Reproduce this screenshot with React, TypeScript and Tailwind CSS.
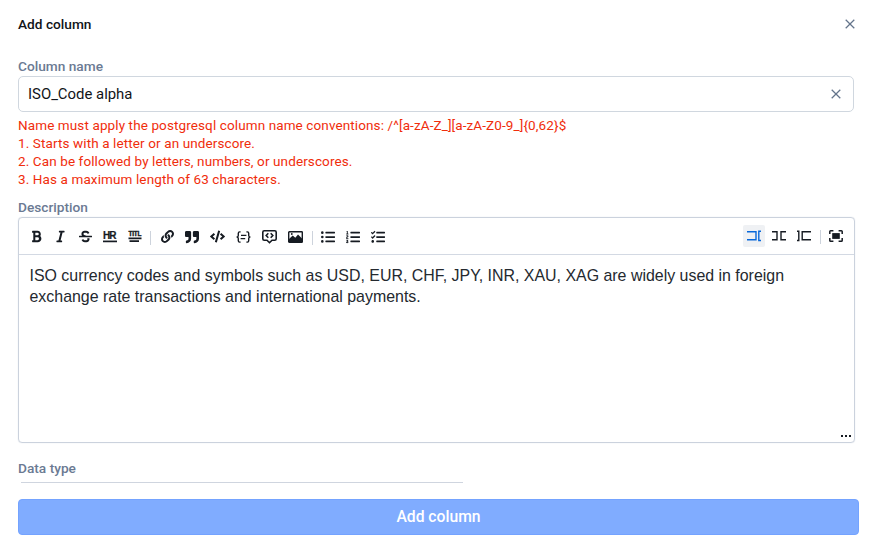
import { useState } from 'react';
import type { ReactNode } from 'react';
import { FaBold, FaItalic, FaStrikethrough, FaLink, FaQuoteRight, FaCode, FaListUl, FaListOl, FaTasks } from 'react-icons/fa';

function CloseIcon() {
  return (
    <svg className="block w-[10px] h-[10px]" viewBox="0 0 10 10" fill="none" stroke="currentColor" strokeWidth="1.25">
      <path d="M0.7 0.7l8.6 8.6M9.3 0.7L0.7 9.3" />
    </svg>
  );
}

function HrIcon() {
  return (
    <svg className="overflow-visible" width="16" height="16" viewBox="0 0 16 16" fill="currentColor" stroke="currentColor">
      <text x="1" y="9.8" textLength="13.6" fontFamily="Liberation Sans, sans-serif" fontSize="10" fontWeight="700" strokeWidth="0.2">HR</text>
      <path d="M1 12.4h14" strokeWidth="1.7" />
    </svg>
  );
}

function TitleIcon() {
  return (
    <svg className="overflow-visible" width="16" height="16" viewBox="0 0 16 16" fill="currentColor" stroke="currentColor">
      <text x="1.4" y="6.9" textLength="13" fontFamily="Liberation Sans, sans-serif" fontSize="6.4" fontWeight="700" strokeWidth="0.4">TITL</text>
      <path d="M1.5 9.3h13M2.5 12.2h9.5" strokeWidth="1.7" />
    </svg>
  );
}

function CodeBlockIcon() {
  return (
    <svg width="15" height="12" viewBox="0 0 15 12" fill="none" stroke="currentColor" strokeWidth="1.4">
      <path d="M4.6 0.9H3.6Q2.3 0.9 2.3 2.2V4.4Q2.3 6 0.6 6Q2.3 6 2.3 7.6V9.8Q2.3 11.1 3.6 11.1H4.6" />
      <path d="M10.4 0.9h1Q12.7 0.9 12.7 2.2V4.4Q12.7 6 14.4 6Q12.7 6 12.7 7.6V9.8Q12.7 11.1 11.4 11.1h-1" />
      <path d="M5 4.4h5.4M4.6 7.6h4.6" />
    </svg>
  );
}

function CommentIcon() {
  return (
    <svg width="15" height="14" viewBox="0 0 15 14" fill="none" stroke="currentColor" strokeWidth="1.6">
      <path d="M2.2 0.8h10.6q1.4 0 1.4 1.4v6.6q0 1.4-1.4 1.4H10L7.5 12.7 5 10.2H2.2Q0.8 10.2 0.8 8.8V2.2Q0.8 0.8 2.2 0.8Z" />
      <path d="M6.3 3.3L4.2 5.5l2.1 2.2M8.7 3.3l2.1 2.2-2.1 2.2" />
    </svg>
  );
}

function ImageIcon() {
  return (
    <svg width="15" height="12" viewBox="0 0 15 12">
      <rect x="0.7" y="0.7" width="13.6" height="10.6" rx="0.6" fill="none" stroke="currentColor" strokeWidth="1.4" />
      <path d="M1 11V8l3.7-3.6 2.6 2.4 2.7-3.2L14 7.6V11Z" fill="currentColor" />
      <circle cx="3.8" cy="3" r="0.9" fill="currentColor" />
    </svg>
  );
}

function EditIcon() {
  return (
    <svg width="14" height="12" viewBox="0 0 14 12" fill="none" stroke="currentColor" strokeWidth="1.4">
      <path d="M0 1.7h9v8.1H0M14 1.2h-2.2v9.3H14" />
    </svg>
  );
}

function LiveIcon() {
  return (
    <svg width="14" height="12" viewBox="0 0 14 12" fill="none" stroke="currentColor" strokeWidth="1.4">
      <path d="M0 1.7h5v8.1H0M14 1.7H9v8.1h5" />
    </svg>
  );
}

function PreviewIcon() {
  return (
    <svg width="14" height="12" viewBox="0 0 14 12" fill="none" stroke="currentColor" strokeWidth="1.4">
      <path d="M0 1.2h1.8v9.3H0M14 1.7H5.2v8.1H14" />
    </svg>
  );
}

function FullscreenIcon() {
  return (
    <svg width="14" height="12" viewBox="0 0 14 12" fill="none" stroke="currentColor" strokeWidth="1.5">
      <path d="M0.8 4V1.6Q0.8 0.8 1.6 0.8H4.4M9.6 0.8h2.8q0.8 0 0.8 0.8V4M13.2 8v2.4q0 0.8-0.8 0.8H9.6M4.4 11.2H1.6Q0.8 11.2 0.8 10.4V8" />
      <rect x="3.2" y="3.1" width="7.6" height="5.8" fill="currentColor" stroke="none" />
    </svg>
  );
}

const textTools: { name: string; icon: ReactNode }[] = [
  { name: 'bold', icon: <FaBold size={13} /> },
  { name: 'italic', icon: <FaItalic size={13} /> },
  { name: 'strikethrough', icon: <FaStrikethrough size={13} /> },
  { name: 'hr', icon: <HrIcon /> },
  { name: 'title', icon: <TitleIcon /> },
];

const insertTools: { name: string; icon: ReactNode; width: string }[] = [
  { name: 'link', icon: <FaLink size={13} />, width: 'w-[25px]' },
  { name: 'quote', icon: <FaQuoteRight size={14} />, width: 'w-[25px]' },
  { name: 'code', icon: <FaCode size={15} />, width: 'w-[26px]' },
  { name: 'code block', icon: <CodeBlockIcon />, width: 'w-[26px]' },
  { name: 'comment', icon: <CommentIcon />, width: 'w-[26px]' },
  { name: 'image', icon: <ImageIcon />, width: 'w-[26px]' },
];

const listTools: { name: string; icon: ReactNode }[] = [
  { name: 'unordered', icon: <FaListUl size={14} /> },
  { name: 'ordered', icon: <FaListOl size={14} /> },
  { name: 'checked', icon: <FaTasks size={14} /> },
];

const modes: { name: string; icon: ReactNode }[] = [
  { name: 'edit', icon: <EditIcon /> },
  { name: 'live', icon: <LiveIcon /> },
  { name: 'preview', icon: <PreviewIcon /> },
];

function Divider() {
  return <span className="w-px h-[14px] mt-[2px] bg-[#cdd3dc]" />;
}

export default function App() {
  const [name, setName] = useState('ISO_Code alpha');
  const [mode, setMode] = useState('edit');

  return (
    <div className="h-[551px] overflow-hidden bg-white pl-[18px] pr-[16px] font-[Roboto,sans-serif] text-[#111418]">
      {/* Header */}
      <div className="flex items-center justify-between h-12 pr-1">
        <h1 className="text-[13.7px] font-medium">Add column</h1>
        <button aria-label="Close" className="text-[#64748b]"><CloseIcon /></button>
      </div>

      {/* Column name */}
      <div className="pt-[9px] pr-[5px]">
        <label className="block text-[13.7px] leading-[19px] font-medium text-[#6b7a93]">Column name</label>
        <div className="flex items-center h-[36px] rounded-[5px] border border-[#d0d7df] pl-[9px] pr-3">
          <input
            className="flex-1 min-w-0 text-[14.9px] outline-none"
            value={name}
            onChange={(e) => setName(e.target.value)}
          />
          <button aria-label="Clear" className="text-[#64748b]" onClick={() => setName('')}><CloseIcon /></button>
        </div>
        <div className="pt-1 text-[13.5px] leading-[18px] tracking-[0.11px] text-[#f02d0c]">
          <p>{'Name must apply the postgresql column name conventions: /^[a-zA-Z_][a-zA-Z0-9_]{0,62}$'}</p>
          <p>1. Starts with a letter or an underscore.</p>
          <p>2. Can be followed by letters, numbers, or underscores.</p>
          <p>3. Has a maximum length of 63 characters.</p>
        </div>
      </div>

      {/* Description */}
      <div className="pt-[10px] pr-1">
        <label className="block text-[13.7px] leading-[19px] font-medium text-[#6b7a93]">Description</label>
        <div className="flex flex-col h-[226px] rounded-[4px] border border-[#cbd2dd] shadow-[0_0_1px_#cbd2dd]">
          <div className="flex items-center justify-between h-[37px] border-b border-[#d3d9e3] pl-[5px] pr-[7px] text-[#161b22]">
            <div className="flex items-center pt-px">
              {textTools.map((t) => (
                <button key={t.name} aria-label={t.name} className="flex items-center justify-center w-[24.6px] h-5">{t.icon}</button>
              ))}
              <span className="flex justify-center w-2"><Divider /></span>
              {insertTools.map((t) => (
                <button key={t.name} aria-label={t.name} className={`flex items-center justify-center h-5 ${t.width}`}>{t.icon}</button>
              ))}
              <span className="flex justify-center w-[7px]"><Divider /></span>
              {listTools.map((t) => (
                <button key={t.name} aria-label={t.name} className="flex items-center justify-center w-[25px] h-5">{t.icon}</button>
              ))}
            </div>
            <div className="flex items-center">
              <div className="flex gap-[3px]">
                {modes.map((m) => (
                  <button
                    key={m.name}
                    aria-label={m.name}
                    onClick={() => setMode(m.name)}
                    className={`flex items-center justify-center w-[22px] h-[22px] -mt-px rounded-[2px] ${mode === m.name ? 'bg-[#eff1f4] text-[#0969da]' : ''}`}
                  >
                    {m.icon}
                  </button>
                ))}
              </div>
              <span className="flex justify-center w-2 ml-px"><Divider /></span>
              <button aria-label="fullscreen" className="flex items-center justify-center w-[23px] h-5 -mt-px"><FullscreenIcon /></button>
            </div>
          </div>
          <p className="flex-1 pl-[10.5px] pt-[10px] font-['Liberation_Sans',sans-serif] text-[15.93px] leading-[21px] text-[#24292f]">
            ISO currency codes and symbols such as USD, EUR, CHF, JPY, INR, XAU, XAG are widely used in foreign<br />
            exchange rate transactions and international payments.
          </p>
          <div className="flex justify-end gap-[2px] pr-[3px] pb-[5px]">
            <span className="w-[2px] h-[2px] bg-[#161b22]" />
            <span className="w-[2px] h-[2px] bg-[#161b22]" />
            <span className="w-[2px] h-[2px] bg-[#161b22]" />
          </div>
        </div>
      </div>

      {/* Data type, the select below it is scrolled out of view */}
      <div className="pt-4 h-[41px]">
        <label className="block text-[13.7px] leading-[19px] font-medium text-[#6b7a93]">Data type</label>
        <div className="w-[442px] h-px ml-[3px] mt-[4px] bg-[#cfd5df]" />
      </div>

      {/* Footer */}
      <button className="flex items-center justify-center w-full h-9 mt-[15px] rounded-[4px] border border-[#74a3ff] bg-[#80acff] text-[15.7px] font-medium text-white">
        Add column
      </button>
    </div>
  );
}
